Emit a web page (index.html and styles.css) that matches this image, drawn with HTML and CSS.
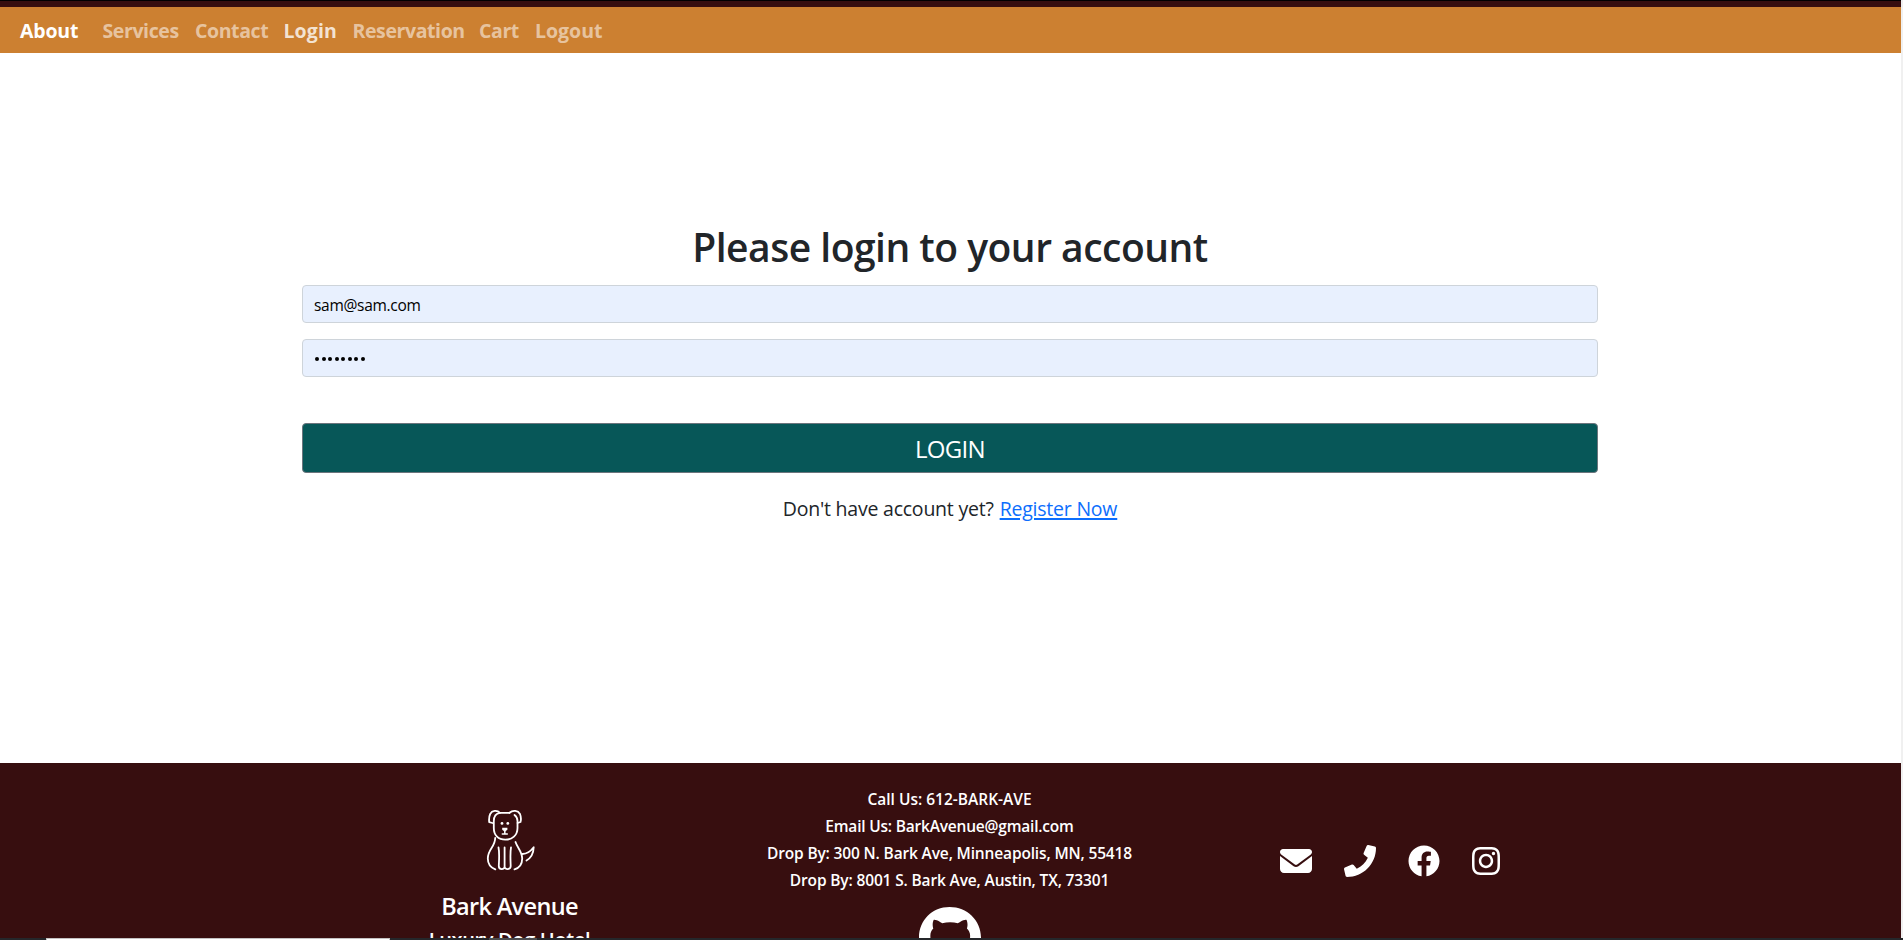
FILE: index.html
```
<!DOCTYPE html>
<html lang="en">
<head>
<meta charset="utf-8">
<title>Bark Avenue</title>
<link rel="stylesheet" href="styles.css">
</head>
<body>
<div class="screen">
  <div class="page">
    <header class="header">
      <nav class="nav">
        <a class="brand">About</a>
        <a>Services</a>
        <a>Contact</a>
        <a class="active">Login</a>
        <a>Reservation</a>
        <a>Cart</a>
        <a class="last">Logout</a>
      </nav>
    </header>
    <main class="main">
      <h1 class="title">Please login to your account</h1>
      <form class="form">
        <input class="field" type="text" value="sam@sam.com" aria-label="Email">
        <div class="field dots" aria-label="Password"><i></i><i></i><i></i><i></i><i></i><i></i><i></i><i></i></div>
        <button class="submit" type="button">LOGIN</button>
      </form>
      <p class="register"><span>Don't have account yet?</span><a>Register Now</a></p>
    </main>
    <footer class="footer">
      <section class="identity">
        <svg class="dog" viewBox="0 0 50 62" fill="none" stroke="#fff" stroke-width="1.8" stroke-linecap="round" stroke-linejoin="round">
          <path d="M14.500 3.800H24.500M15 3.800C10.500 4.500 8.800 8 8.800 12V19C8.800 26.500 13.500 30.700 20.300 30.700S32.500 26.500 32.500 19V12C32.500 9.500 31.500 7.500 29.500 6"/>
          <path d="M15 3.800C12 .8 7 1.500 5.200 5C4 7.500 3.900 10.500 4.200 13.200L7.500 14M24.500 3.800C28 .8 33 1.500 35 5C36 7.500 36.200 10.500 35.500 13L32.600 14"/>
          <path d="M10.200 29C10.200 38 2.800 40 2.800 49.500C2.800 54.500 5.500 58.500 10.300 60.400M30.500 33C32.500 39 37.200 43 37.200 49.500C37.200 55 34 59 29.500 60.400"/>
          <path d="M13.500 38.500C14.700 44 14 51 13.800 57C13.800 61 19.600 61 19.600 57.500V38.500M26 38.500C25 44 25.500 51 25.700 57C25.700 61 19.600 61 19.600 57.500"/>
          <path d="M37 45C42 45.200 45.500 42.500 48.700 38.300C48.500 44 46 49 41.500 51.500"/>
          <path stroke-width="1.500" d="M19.800 20V24.500M17.300 25H22.300"/>
          <g fill="#fff" stroke="none"><circle cx="17" cy="14.400" r="1.400"/><circle cx="22.800" cy="14.400" r="1.400"/><path d="M17.200 18.700H22.400V20.800L19.800 22.800L17.200 20.800Z"/></g>
        </svg>
        <h2 class="name">Bark Avenue</h2>
        <p class="tagline">Luxury Dog Hotel</p>
      </section>
      <section class="contact">
        <p class="call">Call Us: 612-BARK-AVE</p>
        <p class="mail">Email Us: BarkAvenue@gmail.com</p>
        <p>Drop By: 300 N. Bark Ave, Minneapolis, MN, 55418</p>
        <p>Drop By: 8001 S. Bark Ave, Austin, TX, 73301</p>
        <svg class="github" viewBox="0 8 496 504" fill="#fff"><path d="M165.900 397.400c0 2-2.300 3.600-5.200 3.600-3.300.3-5.600-1.300-5.600-3.600 0-2 2.300-3.600 5.200-3.600 3-.3 5.600 1.300 5.600 3.600zM244.800 8C106.100 8 0 113.300 0 252c0 110.900 69.800 205.800 169.500 239.200 12.800 2.300 17.300-5.600 17.300-12.100 0-6.200-.3-40.400-.3-61.400 0 0-70 15-84.700-29.800 0 0-11.400-29.100-27.800-36.600 0 0-22.900-15.700 1.600-15.400 0 0 24.900 2 38.600 25.800 21.900 38.600 58.600 27.500 72.900 20.900 2.300-16 8.800-27.100 16-33.700-55.900-6.200-112.300-14.300-112.300-110.500 0-27.500 7.600-41.300 23.600-58.900-2.600-6.500-11.100-33.300 2.600-67.900 20.900-6.500 69 27 69 27 20-5.600 41.500-8.500 62.800-8.500s42.800 2.900 62.800 8.500c0 0 48.100-33.600 69-27 13.700 34.700 5.200 61.400 2.600 67.900 16 17.700 25.800 31.500 25.800 58.900 0 96.500-58.900 104.200-114.800 110.500 9.200 7.900 17 22.900 17 46.400 0 33.700-.3 75.400-.3 83.600 0 6.500 4.600 14.400 17.300 12.100C428.200 457.800 496 362.900 496 252 496 113.300 383.500 8 244.800 8z"/></svg>
      </section>
      <section class="social">
        <svg class="icon" viewBox="0 0 512 512"><path d="M48 64C21.500 64 0 85.500 0 112c0 15.100 7.100 29.300 19.200 38.400L236.800 313.600c11.400 8.500 27 8.500 38.400 0L492.800 150.400c12.100-9.100 19.200-23.300 19.200-38.400 0-26.500-21.500-48-48-48H48zM0 176V384c0 35.300 28.700 64 64 64H448c35.300 0 64-28.700 64-64V176L294.400 339.200c-22.800 17.100-54 17.100-76.800 0L0 176z"/></svg>
        <svg class="icon" viewBox="0 0 512 512"><path d="M493.400 24.600l-104-24c-11.300-2.600-22.900 3.300-27.500 13.900l-48 112c-4.200 9.800-1.400 21.300 6.900 28l60.600 49.600c-36 76.700-98.900 140.500-177.200 177.200l-49.600-60.600c-6.800-8.300-18.200-11.100-28-6.900l-112 48C3.900 366.500-2 378.100.6 389.400l24 104C27.100 504.200 36.700 512 48 512c256.100 0 464-207.500 464-464 0-11.200-7.700-20.900-18.600-23.400z"/></svg>
        <svg class="icon" viewBox="0 0 512 512"><path d="M504 256C504 119 393 8 256 8S8 119 8 256c0 123.780 90.690 226.380 209.250 245V327.690h-63V256h63v-54.640c0-62.150 37-96.480 93.670-96.480 27.140 0 55.520 4.840 55.520 4.840v61h-31.280c-30.800 0-40.410 19.120-40.410 38.730V256h68.780l-11 71.690h-57.780V501C413.310 482.380 504 379.780 504 256z"/></svg>
        <svg class="icon insta" viewBox="0 32 448 448"><path d="M224.100 141c-63.600 0-114.900 51.300-114.900 114.900s51.300 114.900 114.900 114.900S339 319.500 339 255.900 287.700 141 224.100 141zm0 189.600c-41.100 0-74.700-33.500-74.700-74.700s33.500-74.700 74.700-74.700 74.700 33.500 74.700 74.700-33.600 74.700-74.700 74.700zm146.400-194.300c0 14.900-12 26.800-26.800 26.800-14.900 0-26.800-12-26.800-26.800s12-26.800 26.800-26.800 26.800 12 26.800 26.800zm76.100 27.200c-1.700-35.900-9.900-67.700-36.200-93.900-26.200-26.200-58-34.400-93.900-36.200-37-2.100-147.900-2.100-184.900 0-35.800 1.700-67.600 9.900-93.900 36.100s-34.400 58-36.200 93.900c-2.100 37-2.100 147.900 0 184.900 1.700 35.900 9.900 67.700 36.200 93.900s58 34.400 93.900 36.200c37 2.100 147.900 2.100 184.900 0 35.900-1.700 67.700-9.900 93.900-36.200 26.200-26.200 34.400-58 36.200-93.900 2.100-37 2.100-147.800 0-184.800zM398.800 388c-7.800 19.600-22.900 34.700-42.600 42.600-29.500 11.700-99.500 9-132.100 9s-102.700 2.600-132.100-9c-19.600-7.800-34.700-22.900-42.600-42.600-11.700-29.500-9-99.500-9-132.100s-2.600-102.700 9-132.100c7.800-19.600 22.900-34.700 42.600-42.600 29.500-11.700 99.500-9 132.100-9s102.700-2.600 132.100 9c19.600 7.800 34.700 22.900 42.600 42.600 11.700 29.500 9 99.500 9 132.100s2.700 102.700-9 132.100z"/></svg>
      </section>
    </footer>
  </div>
  <div class="taskbar"><div class="search"></div><div class="task"></div></div>
</div>
</body>
</html>
```
FILE: styles.css
```
* { box-sizing: border-box; margin: 0; padding: 0; }
body {
  background: #fff;
  color: #212529;
  font-family: "Open Sans", "Noto Sans", sans-serif;
  overflow: hidden;
}
.screen { height: 940px; display: flex; flex-direction: column; background: #f0f0f0; }
.page {
  height: 938px;
  margin-right: 2px;
  display: flex;
  flex-direction: column;
  overflow: hidden;
  background: #fff;
}
.header { flex: none; border-top: 1px solid #000; padding-top: 6px; background: #370e0f; }
.nav {
  height: 46px;
  padding: 2px 0 0 20px;
  display: grid;
  grid-template-columns: 82.500px 92.500px 88.500px 69px 126.500px 56px 80px;
  align-items: center;
  background: #cc8031;
  color: rgba(255, 255, 255, .55);
  font-size: 19.500px;
  font-weight: 700;
  letter-spacing: -.4px;
  line-height: 30px;
}
.nav .brand { color: #fff; letter-spacing: -.2px; }
.nav .active { color: rgba(255, 255, 255, .78); letter-spacing: .1px; }
.nav .last { letter-spacing: 0; }
.main { flex: none; height: 710px; padding: 169px 303px 0 302px; }
.title { height: 63px; font-size: 39px; font-weight: 600; line-height: 49px; text-align: center; letter-spacing: -.5px; }
.form { display: flex; flex-direction: column; }
.field {
  width: 100%;
  height: 38px;
  margin-bottom: 16px;
  padding: 1px 12px 0 11px;
  border: 1px solid #ced4da;
  border-radius: 4px;
  background: #e8f0fe;
  color: #000;
  font: 15.500px "Open Sans", sans-serif;
  letter-spacing: -.3px;
}
.dots { display: flex; align-items: center; gap: 2.500px; padding: 2px 12px 0; }
.dots i { width: 4px; height: 4px; border-radius: 50%; background: #000; }
.submit {
  height: 50px;
  margin-top: 30px;
  padding-top: 1px;
  border: 1px solid #6c757d;
  border-radius: 4px;
  background: #075758;
  color: #fff;
  font: 24px "Open Sans", sans-serif;
  letter-spacing: -.7px;
}
.register {
  margin-top: 21px;
  display: flex;
  justify-content: center;
  gap: 6px;
  font-size: 19.500px;
  line-height: 30px;
  letter-spacing: -.22px;
}
.register a { color: #0d6efd; text-decoration: underline; text-decoration-thickness: 2px; text-underline-offset: 2px; text-decoration-skip-ink: auto; }
.footer {
  flex: 1;
  min-height: 0;
  display: grid;
  grid-template-columns: 440px 440px 440px;
  justify-content: center;
  padding-right: 2px;
  background: #370e0f;
  color: #fff;
  font-weight: 600;
  text-align: center;
}
.identity { padding-top: 46px; display: flex; flex-direction: column; align-items: center; }
.dog { width: 50px; height: 62px; flex: none; }
.name { margin-top: 21px; font-size: 23.500px; line-height: 29px; font-weight: 600; letter-spacing: -.65px; white-space: nowrap; }
.tagline { margin-top: 7px; font-size: 20px; line-height: 24px; letter-spacing: -.35px; }
.contact { padding-top: 23px; font-size: 15.500px; line-height: 27px; letter-spacing: -.15px; }
.contact .call { letter-spacing: 0; }
.contact .mail { letter-spacing: -.2px; }
.github { display: block; width: 62px; height: 63px; margin: 13px auto 0; }
.social { padding-top: 82px; display: flex; justify-content: center; align-items: flex-start; gap: 32px; }
.icon { width: 32px; height: 32px; fill: #fff; }
.insta { width: 28px; height: 28px; margin-top: 2px; }
.taskbar { flex: none; height: 2px; display: flex; background: #25272b; }
.search { width: 344px; margin-left: 46px; border: 1px solid #c4c2c2; border-bottom: 0; background: #fff; }
.task { width: 48px; margin-left: 99px; background: #4b4b4d; }
```
